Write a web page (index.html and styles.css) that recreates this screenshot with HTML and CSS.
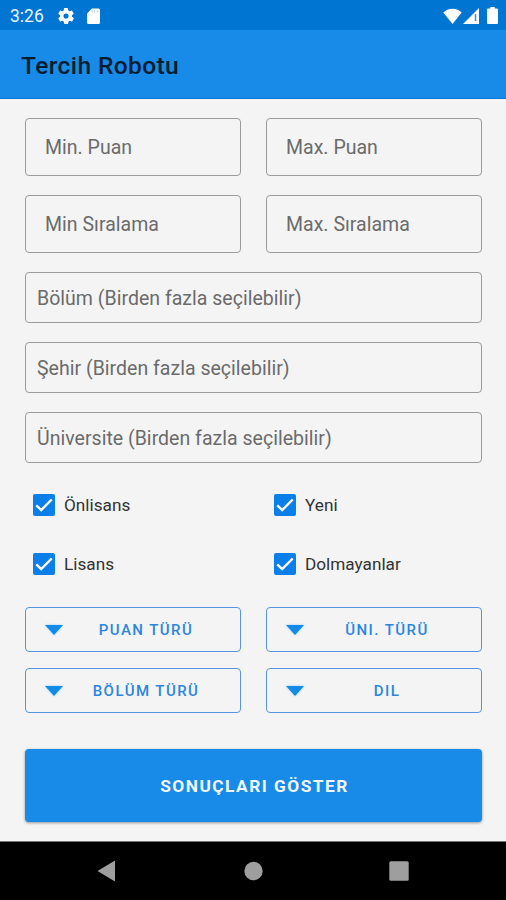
FILE: index.html
```html
<!DOCTYPE html>
<html lang="tr">
<head>
<meta charset="utf-8">
<title>Tercih Robotu</title>
<link rel="stylesheet" href="styles.css">
</head>
<body>
<header class="status">
  <span class="clock">3:26</span>
  <svg class="gear" viewBox="2 2 20 20"><path d="M19.4 13a7.5 7.5 0 0 0 0-2l2.1-1.6a.5.5 0 0 0 .1-.6l-2-3.5a.5.5 0 0 0-.6-.2l-2.5 1a7.300 7.300 0 0 0-1.700-1l-.4-2.600A.5.5 0 0 0 14 2h-4a.5.5 0 0 0-.5.4L9.200 5.100a7.700 7.700 0 0 0-1.700 1L5 5.100a.5.5 0 0 0-.6.2l-2 3.500a.5.5 0 0 0 .1.600L4.600 11a7.900 7.900 0 0 0 0 2l-2.100 1.600a.5.5 0 0 0-.1.600l2 3.500c.1.200.4.300.6.200l2.500-1a7.300 7.300 0 0 0 1.700 1l.4 2.600c0 .3.200.5.500.5h4c.2 0 .5-.2.500-.4l.4-2.700a7.700 7.700 0 0 0 1.700-1l2.500 1c.2.100.5 0 .6-.2l2-3.500a.5.5 0 0 0-.1-.6zM12 15.200a3.200 3.200 0 1 1 0-6.400 3.200 3.200 0 0 1 0 6.400z"/></svg>
  <svg class="sd" viewBox="0 0 13 16"><path d="M5 .5h6.500A1.500 1.500 0 0 1 13 2v12.500a1.500 1.500 0 0 1-1.500 1.500h-10A1.500 1.500 0 0 1 0 14.500V5.500z"/><path class="slots" d="M5.200 2.500v2M7.700 2.500v2M10.200 2.500v2"/></svg>
  <span class="spacer"></span>
  <svg class="wifi" viewBox="0 0 19 16"><path d="M9.500 16 .3 4.500C2.500 2 6 .7 9.500.7S16.500 2 18.700 4.500z"/></svg>
  <svg class="signal" viewBox="0 0 16 16"><path d="M16 0v16H0z"/><path class="gap" d="M12.500 6v7"/></svg>
  <svg class="battery" viewBox="0 0 11 17"><path d="M3.300 0h4.400v1.500H10a1 1 0 0 1 1 1V16a1 1 0 0 1-1 1H1a1 1 0 0 1-1-1V2.500a1 1 0 0 1 1-1h2.300z"/></svg>
</header>
<div class="appbar"><h1>Tercih Robotu</h1></div>
<main>
  <section class="inputs">
    <div class="field"><span>Min. Puan</span></div>
    <div class="field"><span>Max. Puan</span></div>
    <div class="field"><span>Min Sıralama</span></div>
    <div class="field"><span>Max. Sıralama</span></div>
  </section>
  <section class="pickers">
    <div class="field wide"><span>Bölüm (Birden fazla seçilebilir)</span></div>
    <div class="field wide"><span>Şehir (Birden fazla seçilebilir)</span></div>
    <div class="field wide"><span>Üniversite (Birden fazla seçilebilir)</span></div>
  </section>
  <section class="checks">
    <div class="check"><svg viewBox="0 0 22 22"><path d="m3.300 11.300 4.900 4.800L18.700 5.500"/></svg><span>Önlisans</span></div>
    <div class="check"><svg viewBox="0 0 22 22"><path d="m3.300 11.300 4.900 4.800L18.700 5.500"/></svg><span>Yeni</span></div>
    <div class="check"><svg viewBox="0 0 22 22"><path d="m3.300 11.300 4.900 4.800L18.700 5.500"/></svg><span>Lisans</span></div>
    <div class="check"><svg viewBox="0 0 22 22"><path d="m3.300 11.300 4.900 4.800L18.700 5.500"/></svg><span>Dolmayanlar</span></div>
  </section>
  <section class="selects">
    <div class="select"><svg viewBox="0 0 18 10"><path d="M0 0h18L9 10z"/></svg><span>PUAN TÜRÜ</span></div>
    <div class="select"><svg viewBox="0 0 18 10"><path d="M0 0h18L9 10z"/></svg><span>ÜNI. TÜRÜ</span></div>
    <div class="select"><svg viewBox="0 0 18 10"><path d="M0 0h18L9 10z"/></svg><span>BÖLÜM TÜRÜ</span></div>
    <div class="select"><svg viewBox="0 0 18 10"><path d="M0 0h18L9 10z"/></svg><span>DIL</span></div>
  </section>
  <div class="submit">SONUÇLARI GÖSTER</div>
</main>
<nav>
  <svg viewBox="0 0 20 22"><path d="M18 .5v21L.5 11z"/></svg>
  <svg viewBox="0 0 20 22"><circle cx="10.500" cy="11" r="9.200"/></svg>
  <svg viewBox="0 0 20 22"><rect x=".3" y="1.300" width="19.400" height="19.400" rx="1.500"/></svg>
</nav>
</body>
</html>
```
FILE: styles.css
```css
* { box-sizing: border-box; }
body {
  margin: 0;
  width: 506px;
  height: 900px;
  display: flex;
  flex-direction: column;
  overflow: hidden;
  background: #f4f4f4;
  font-family: Roboto, "Liberation Sans", sans-serif;
}
svg { display: block; flex: none; }
.status {
  height: 30px;
  flex: none;
  display: flex;
  align-items: center;
  padding: 1px 8px 0 10px;
  background: #0075d2;
  color: #e8f4ff;
  fill: #fff;
}
.clock { width: 48px; font-size: 17.5px; }
.gear { width: 16px; height: 16px; }
.sd { width: 13px; height: 16px; margin-left: 13px; }
.slots { stroke: #a8cdf0; stroke-width: 1; }
.spacer { flex: 1; }
.wifi { width: 19px; height: 16px; }
.signal { width: 16px; height: 16px; margin-left: 1px; }
.gap { stroke: #3b8fd9; stroke-width: 1.5; }
.battery { width: 11px; height: 17px; margin-left: 8px; }
.appbar {
  height: 69px;
  flex: none;
  display: flex;
  align-items: center;
  padding: 2px 0 0 21px;
  background: #188ae8;
  border-bottom: 1px solid #0878d6;
}
h1 { margin: 0; font-size: 24.500px; font-weight: 500; letter-spacing: .4px; color: #031c30; }
main { flex: 1; padding: 19px 24px 0 25px; }
.inputs { display: grid; grid-template-columns: 216px 216px; column-gap: 25px; row-gap: 19px; }
.field {
  height: 58px;
  display: flex;
  align-items: center;
  padding-left: 19px;
  border: 1px solid #9b9b9b;
  border-radius: 4px;
  color: #6b6b6b;
  font-size: 19.500px;
  letter-spacing: .02px;
}
.pickers { display: grid; row-gap: 19px; margin-top: 19px; }
.wide { height: 51px; padding: 1px 0 0 11px; }
.checks {
  display: grid;
  grid-template-columns: 241px 1fr;
  row-gap: 37px;
  margin: 31px 0 0 8px;
}
.check { height: 22px; display: flex; align-items: center; gap: 9px; font-size: 17.200px; color: #333; }
.check svg { width: 22px; height: 22px; border-radius: 2px; background: #0b7fe9; fill: none; stroke: #fff; stroke-width: 2.400; }
.selects { display: grid; grid-template-columns: 216px 216px; column-gap: 25px; row-gap: 16px; margin-top: 32px; }
.select {
  height: 45px;
  display: flex;
  align-items: center;
  padding: 0 11px 0 20px;
  border: 1px solid #5795e0;
  border-radius: 4px;
  color: #2b86df;
  font-size: 15px;
  font-weight: 500;
  letter-spacing: 1.450px;
}
.select svg { width: 18px; height: 10px; margin-left: -1px; fill: #128ae8; filter: drop-shadow(0 0 1px #8fd0fa); }
.select span { flex: 1; text-align: center; }
.submit {
  height: 73px;
  display: flex;
  align-items: center;
  justify-content: center;
  margin-top: 36px;
  padding-left: 2px;
  border-radius: 4px;
  background: #188ae8;
  box-shadow: 0 1px 3px #0006;
  color: #f1f8ff;
  font-size: 17.300px;
  font-weight: 700;
  letter-spacing: 1.480px;
}
nav {
  height: 59px;
  flex: none;
  display: flex;
  justify-content: space-between;
  align-items: center;
  padding: 0 97px;
  border-top: 1px solid #777;
  background: #000;
  fill: #9e9e9e;
}
nav svg { width: 20px; height: 22px; }
```
